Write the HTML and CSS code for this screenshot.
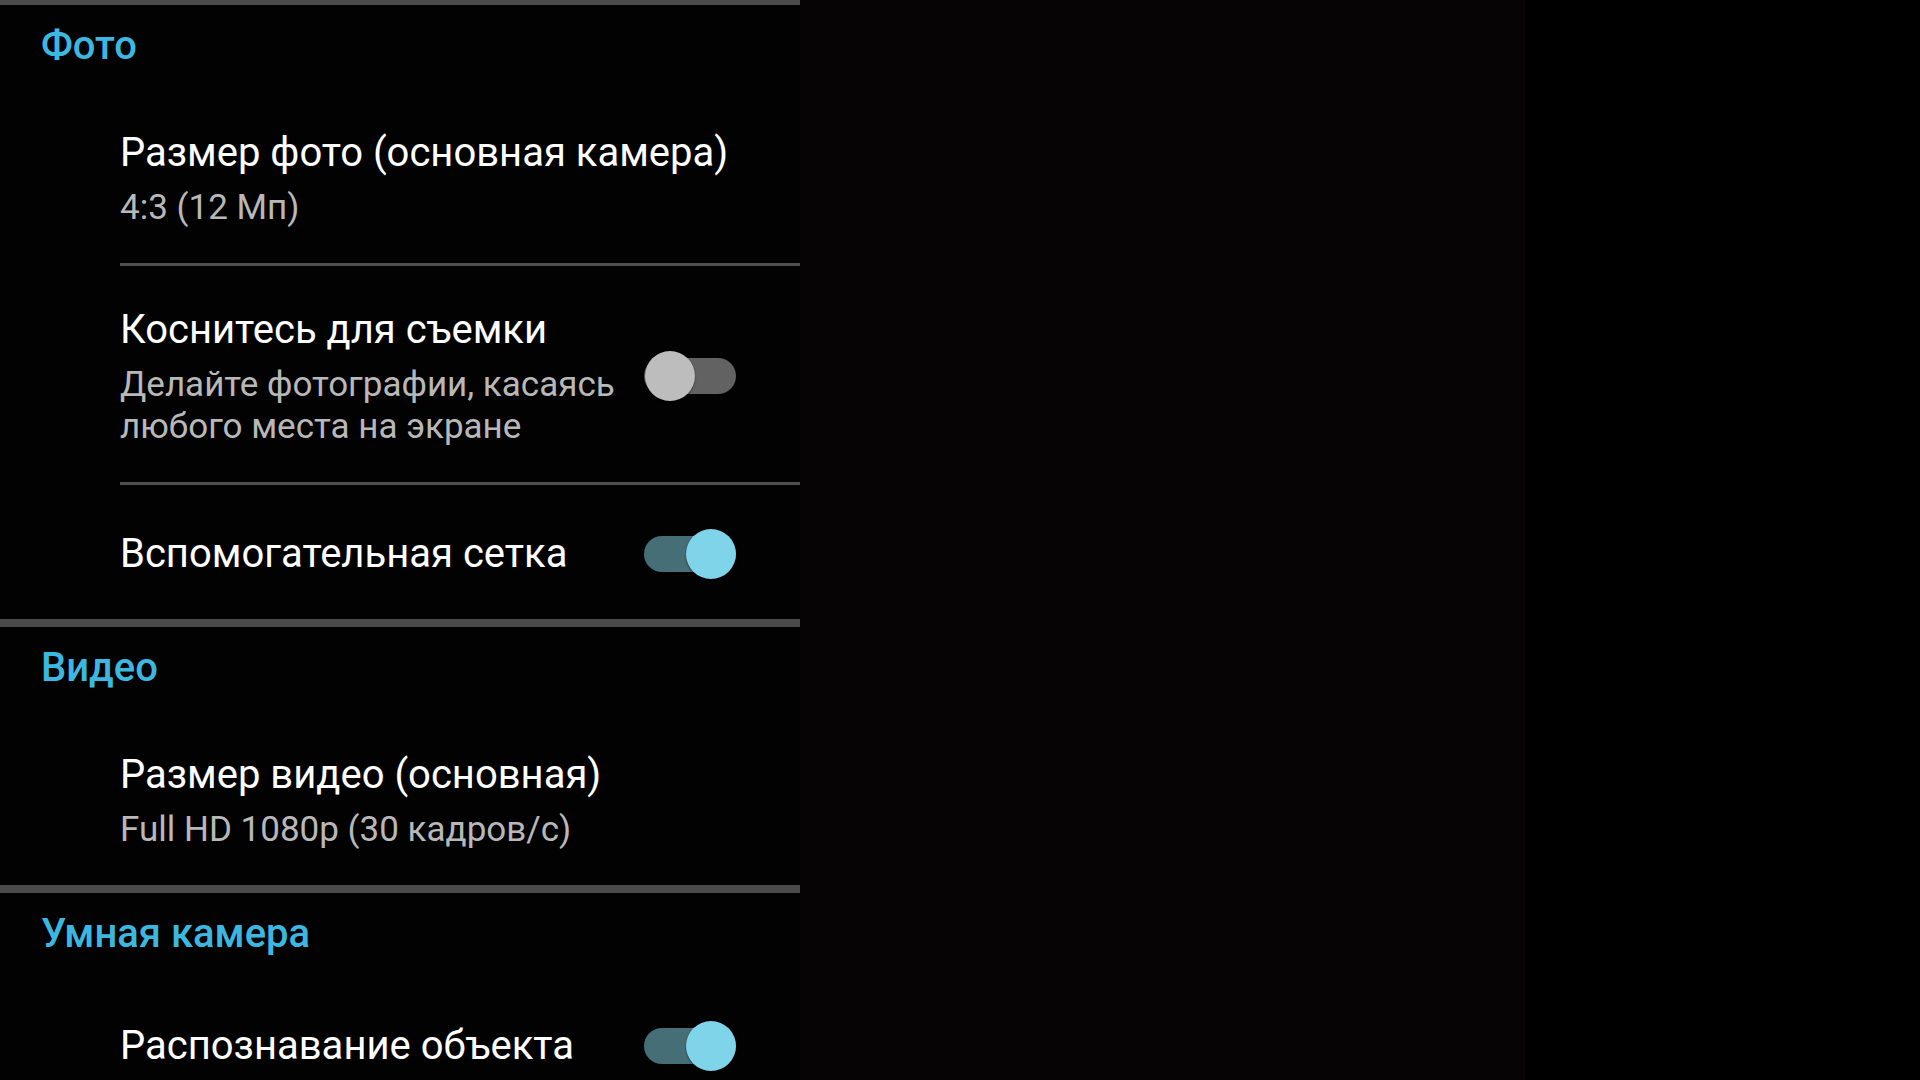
FILE: index.html
```html
<!DOCTYPE html>
<html lang="ru">
<head>
<meta charset="utf-8">
<title>Настройки камеры</title>
<link rel="stylesheet" href="styles.css">
</head>
<body>
<div class="screen">
  <div class="settings">
    <div class="list">
      <div class="bar bar-top"></div>

      <div class="category">Фото</div>
      <div class="item">
        <div class="text">
          <div class="title">Размер фото (основная камера)</div>
          <div class="summary">4:3 (12 Мп)</div>
        </div>
      </div>
      <div class="divider"></div>
      <div class="item">
        <div class="text">
          <div class="title">Коснитесь для съемки</div>
          <div class="summary">Делайте фотографии, касаясь<br>любого места на экране</div>
        </div>
        <div class="switch off"><span class="knob"></span></div>
      </div>
      <div class="divider"></div>
      <div class="item single">
        <div class="text">
          <div class="title">Вспомогательная сетка</div>
        </div>
        <div class="switch on"><span class="knob"></span></div>
      </div>

      <div class="bar"></div>
      <div class="category">Видео</div>
      <div class="item">
        <div class="text">
          <div class="title">Размер видео (основная)</div>
          <div class="summary">Full HD 1080p (30 кадров/с)</div>
        </div>
      </div>

      <div class="bar"></div>
      <div class="category">Умная камера</div>
      <div class="item single">
        <div class="text">
          <div class="title">Распознавание объекта</div>
        </div>
        <div class="switch on"><span class="knob"></span></div>
      </div>
    </div>
    <div class="preview"></div>
  </div>
</div>
</body>
</html>
```

FILE: styles.css
```css
html, body {
  margin: 0;
  padding: 0;
  background: #000;
}

.screen {
  width: 1920px;
  height: 1080px;
  overflow: hidden;
  background: #000;
  font-family: Roboto, "Noto Sans", "DejaVu Sans", sans-serif;
}

.settings {
  display: flex;
  align-items: flex-start;
  width: 1525px;
  height: 1080px;
  background: #060404;
}

.list {
  width: 800px;
  min-height: 1080px;
  flex: none;
  background: #030202;
  display: flex;
  flex-direction: column;
}

.list > * {
  flex: none;
}

.preview {
  flex: 1;
}

.bar {
  height: 8px;
  background: #4a4a4a;
}

.bar-top {
  height: 5px;
}

.category {
  color: #3cb8e0;
  font-size: 40px;
  font-weight: 500;
  line-height: 48px;
  padding: 17px 0 19px 41px;
}

.item {
  display: flex;
  align-items: center;
  padding: 38px 64px 34px 120px;
}

.item.single {
  padding-top: 43px;
  padding-bottom: 39px;
}

.text {
  flex: 1;
  min-width: 0;
}

.title {
  color: #ffffff;
  font-size: 40px;
  line-height: 52px;
  white-space: nowrap;
}

.summary {
  color: #b8b8b8;
  font-size: 35px;
  line-height: 42px;
  margin-top: 8px;
  white-space: nowrap;
}

.divider {
  height: 3px;
  margin-left: 120px;
  background: #4f4f4f;
}

.switch {
  position: relative;
  flex: none;
  width: 92px;
  height: 50px;
}

.switch::before {
  content: "";
  position: absolute;
  left: 0;
  right: 0;
  top: 7px;
  height: 36px;
  border-radius: 18px;
  background: #626262;
}

.switch.on::before {
  background: #466e77;
}

.knob {
  position: absolute;
  top: 0;
  left: 1px;
  width: 50px;
  height: 50px;
  border-radius: 50%;
  background: #bdbdbd;
  box-shadow: 0 1px 2px rgba(0, 0, 0, 0.5);
}

.switch.on .knob {
  left: auto;
  right: 0;
  background: #80d4ea;
}
```
